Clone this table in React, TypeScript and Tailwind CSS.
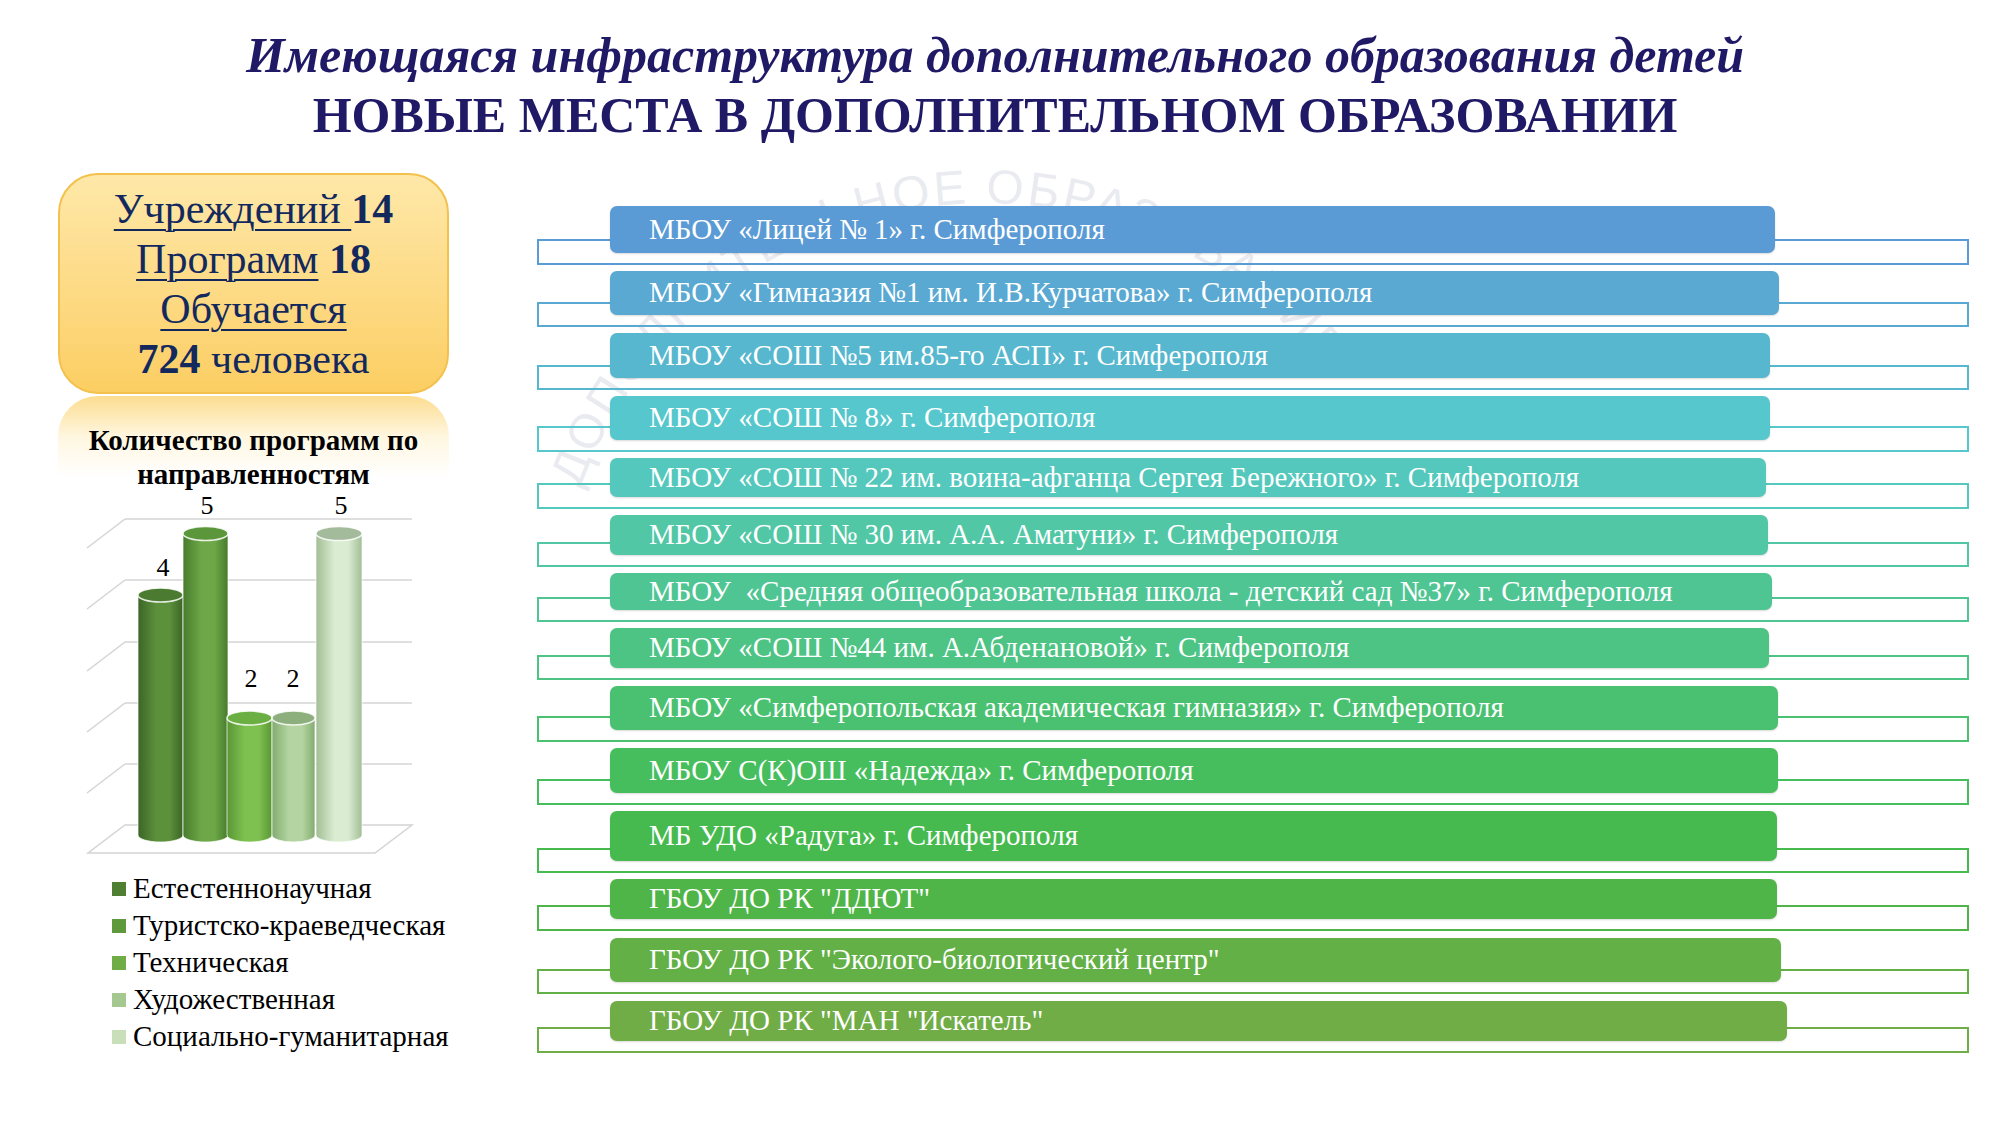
import React from "react";

type Row = { t: string; c: string; h: number; p: number; lt: number; w: number };

const rows: Row[] = [
  { t: "МБОУ «Лицей № 1» г. Симферополя", c: "#5B9BD5", h: 47, p: 65, lt: 33, w: 1165 },
  { t: "МБОУ «Гимназия №1 им. И.В.Курчатова» г. Симферополя", c: "#59A9D2", h: 44, p: 62, lt: 31, w: 1169 },
  { t: "МБОУ «СОШ №5 им.85-го АСП» г. Симферополя", c: "#57B7CE", h: 45, p: 63, lt: 32, w: 1160 },
  { t: "МБОУ «СОШ № 8» г. Симферополя", c: "#55C7CD", h: 44, p: 62, lt: 30, w: 1160 },
  { t: "МБОУ «СОШ № 22 им. воина-афганца Сергея Бережного» г. Симферополя", c: "#54C8BC", h: 39, p: 57, lt: 25, w: 1156 },
  { t: "МБОУ «СОШ № 30 им. А.А. Аматуни» г. Симферополя", c: "#52C7A6", h: 40, p: 58, lt: 27, w: 1158 },
  { t: "МБОУ  «Средняя общеобразовательная школа - детский сад №37» г. Симферополя", c: "#50C594", h: 37, p: 55, lt: 24, w: 1162 },
  { t: "МБОУ «СОШ №44 им. А.Абденановой» г. Симферополя", c: "#4DC384", h: 40, p: 58, lt: 27, w: 1159 },
  { t: "МБОУ «Симферопольская академическая гимназия» г. Симферополя", c: "#4AC170", h: 44, p: 62, lt: 30, w: 1168 },
  { t: "МБОУ С(К)ОШ «Надежда» г. Симферополя", c: "#47BE5E", h: 45, p: 63, lt: 31, w: 1168 },
  { t: "МБ УДО «Радуга» г. Симферополя", c: "#46BA4F", h: 50, p: 68, lt: 37, w: 1167 },
  { t: "ГБОУ ДО РК \"ДДЮТ\"", c: "#50B548", h: 40, p: 59, lt: 26, w: 1167 },
  { t: "ГБОУ ДО РК \"Эколого-биологический центр\"", c: "#62B046", h: 44, p: 63, lt: 31, w: 1171 },
  { t: "ГБОУ ДО РК \"МАН \"Искатель\"", c: "#70AD47", h: 40, p: 60, lt: 26, w: 1177 },
];

const bars = [
  { x: 138, w: 45, v: 4, c1: "#3B6526", c2: "#5C903B", top: "#4B7B31", lx: 163, ly: 576, l: "4" },
  { x: 183, w: 45, v: 5, c1: "#477B2C", c2: "#6DA747", top: "#5B963A", lx: 207, ly: 514, l: "5" },
  { x: 227, w: 45, v: 2, c1: "#5B9736", c2: "#7EC150", top: "#6BAE42", lx: 251, ly: 687, l: "2" },
  { x: 272, w: 43, v: 2, c1: "#83AB70", c2: "#B4D5A2", top: "#8DAF7D", lx: 293, ly: 687, l: "2" },
  { x: 316, w: 46, v: 5, c1: "#A2BE95", c2: "#DAECD1", top: "#A3BA9B", lx: 341, ly: 514, l: "5" },
];

const legend = [
  { t: "Естестеннонаучная", c: "#4E7F33" },
  { t: "Туристско-краеведческая", c: "#5E9A3C" },
  { t: "Техническая", c: "#70AD47" },
  { t: "Художественная", c: "#A5C890" },
  { t: "Социально-гуманитарная", c: "#C8DFBA" },
];

function Chart() {
  const grid = [519, 580, 642, 703, 764];
  return (
    <svg width={470} height={379} viewBox="0 491 470 379" className="block">
      <defs>
        {bars.map((b, i) => (
          <linearGradient key={i} id={`cyl${i}`} x1="0" y1="0" x2="1" y2="0">
            <stop offset="0" stopColor={b.c1} />
            <stop offset="0.4" stopColor={b.c2} />
            <stop offset="0.7" stopColor={b.c2} />
            <stop offset="1" stopColor={b.c1} />
          </linearGradient>
        ))}
      </defs>
      {grid.map((y) => (
        <g key={y} stroke="#D4D4D4" strokeWidth={1.5} fill="none">
          <line x1={125} y1={y} x2={412} y2={y} />
          <line x1={125} y1={y} x2={87} y2={y + 29} />
        </g>
      ))}
      <polygon points="125,825 412,825 375,853 88,853" fill="none" stroke="#D4D4D4" strokeWidth={1.5} />
      {bars.map((b, i) => {
        const yT = 841 - 61.5 * b.v;
        const yB = 835;
        const rx = b.w / 2;
        const ry = 7;
        return (
          <g key={i}>
            <path
              d={`M ${b.x} ${yT} L ${b.x} ${yB} A ${rx} ${ry} 0 0 0 ${b.x + b.w} ${yB} L ${b.x + b.w} ${yT} Z`}
              fill={`url(#cyl${i})`}
              stroke="#ffffff"
              strokeOpacity={0.7}
              strokeWidth={1}
            />
            <ellipse cx={b.x + rx} cy={yT} rx={rx} ry={ry} fill={b.top} stroke="#ffffff" strokeOpacity={0.85} strokeWidth={1.5} />
            <text x={b.lx} y={b.ly} textAnchor="middle" fontSize={26} fontFamily="'Liberation Serif', serif" fill="#000">
              {b.l}
            </text>
          </g>
        );
      })}
    </svg>
  );
}

export default function App() {
  return (
    <div className="relative w-[2000px] h-[1125px] bg-white overflow-hidden font-['Liberation_Serif','Times_New_Roman',serif]">
      <svg className="absolute left-0 top-0 pointer-events-none" width={2000} height={1125}>
        <defs>
          <path id="wm-arc" d="M 555 633 A 430 430 0 0 1 1415 633" />
        </defs>
        <text
          fontFamily="'Liberation Sans', sans-serif"
          fontSize={48}
          letterSpacing={3}
          fill="#D3D8E2"
          fillOpacity={0.5}
        >
          <textPath href="#wm-arc" startOffset="45%" textAnchor="middle">
            ДОПОЛНИТЕЛЬНОЕ ОБРАЗОВАНИЕ
          </textPath>
        </text>
      </svg>

      <div className="relative">
        <div className="pt-[25px] pr-[10px] text-center text-[#201A66] font-bold text-[50px] leading-[60px]">
          <div className="italic">Имеющаяся инфраструктура дополнительного образования детей</div>
          <div>НОВЫЕ МЕСТА В ДОПОЛНИТЕЛЬНОМ ОБРАЗОВАНИИ</div>
        </div>

        <div className="flex">
          <div className="w-[470px] shrink-0 flex flex-col">
            <div className="mt-[28px] ml-[58px] w-[391px] h-[221px] rounded-[40px] border-2 border-[#F2C14E] bg-gradient-to-b from-[#FEE8A8] to-[#FCCE62] flex flex-col items-center pt-[9px] text-[42px] leading-[50px] text-[#13295E]">
              <div>
                <span className="underline decoration-2 underline-offset-[6px]">Учреждений </span>
                <span className="font-bold">14</span>
              </div>
              <div>
                <span className="underline decoration-2 underline-offset-[6px]">Программ</span> <span className="font-bold">18</span>
              </div>
              <div>
                <span className="underline decoration-2 underline-offset-[6px]">Обучается</span>
              </div>
              <div>
                <span className="font-bold">724</span> человека
              </div>
            </div>
            <div className="relative ml-[58px] w-[391px] h-[97px]">
              <div className="absolute left-0 top-[2px] w-full h-[82px] rounded-t-[40px] bg-gradient-to-b from-[#FCDD8F] via-[#FEF1CC]/60 to-white/0" />
              <div className="relative pt-[29px] text-center font-bold text-[29px] leading-[34px] text-black whitespace-nowrap">
                Количество программ по
                <br />
                направленностям
              </div>
            </div>
            <Chart />
            <div className="flex flex-col pl-[112px]">
              {legend.map((l) => (
                <div key={l.t} className="flex items-center h-[37px] text-[29px] leading-[37px] text-black whitespace-nowrap">
                  <span className="w-[14px] h-[14px] mr-[7px] shrink-0" style={{ backgroundColor: l.c }} />
                  <span>{l.t}</span>
                </div>
              ))}
            </div>
          </div>

          <div className="mt-[61px] ml-[67px] w-[1432px] flex flex-col">
            {rows.map((r) => (
              <div key={r.t} className="relative" style={{ height: r.p }}>
                <div
                  className="absolute left-0 right-0 border-[2.5px]"
                  style={{ top: r.lt, height: r.h + 12 - r.lt, borderColor: r.c }}
                />
                <div
                  className="relative ml-[73px] rounded-[7px] flex items-center pl-[39px] text-white text-[29px] whitespace-pre shadow-[0_1px_2px_rgba(0,0,0,0.15)]"
                  style={{ width: r.w, height: r.h, backgroundColor: r.c }}
                >
                  {r.t}
                </div>
              </div>
            ))}
          </div>
        </div>
      </div>
    </div>
  );
}
